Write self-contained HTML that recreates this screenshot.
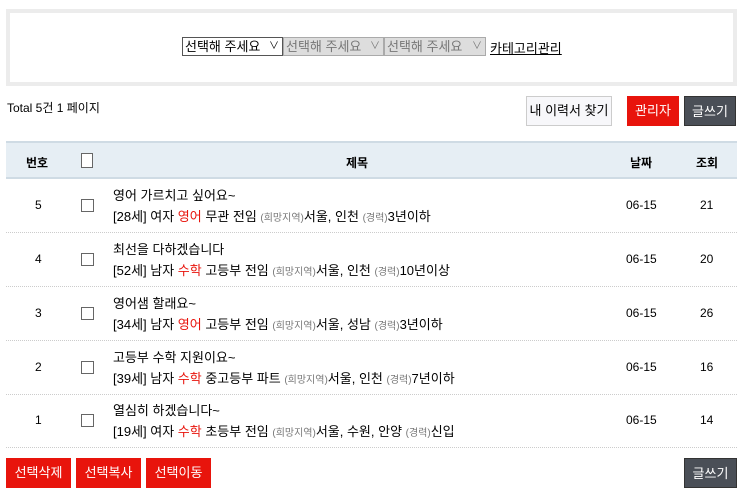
<!DOCTYPE html>
<html><head><meta charset="utf-8"><style>
*{margin:0;padding:0;box-sizing:border-box}
body{width:743px;height:498px;background:#fff;font-family:"Liberation Sans","Noto Sans CJK KR",sans-serif;font-size:12px;color:#000;position:relative;overflow:hidden}
.a{position:absolute}
.topbox{left:6px;top:9px;width:731px;height:77px;border:4px solid #ececec;background:#fff}
.sel{top:37px;height:19px;border:1px solid #aaa;background:#ddd;color:#777;font-size:13px;line-height:17px;padding-left:2px;white-space:nowrap}
.sel span{position:absolute;right:3px;top:0;font-size:10px}
.btn{height:30px;line-height:30px;text-align:center;font-size:13px;color:#fff}
.red{background:#e8140c}
.dark{background:#4a4f57;border:1px solid #333}
.hdr{left:6px;top:141px;width:731px;height:38px;background:#e6eef4;border-top:2px solid #cfdbe4;border-bottom:2px solid #cfdbe4;font-weight:bold;font-size:12px}
.hdr div{position:absolute;top:11px}
.cb{width:13px;height:13px;border:1px solid #666;background:#fff}
.row{left:6px;width:731px;height:54px;border-bottom:1px dotted #ccc}
.row div{position:absolute}
.t{font-size:13px;white-space:nowrap}
.r{color:#e8140c}
.g{color:#777;font-size:10px}
</style></head><body>
<div class="a topbox"></div>
<div class="a sel" style="left:182px;width:101px;background:#fff;color:#000;border-color:#555">선택해 주세요<span style="color:#000">∨</span></div>
<div class="a sel" style="left:283px;width:101px">선택해 주세요<span>∨</span></div>
<div class="a sel" style="left:384px;width:102px">선택해 주세요<span>∨</span></div>
<div class="a" style="left:490px;top:38px;text-decoration:underline;font-size:13px">카테고리관리</div>
<div class="a" style="left:7px;top:99px">Total 5건 1 페이지</div>
<div class="a btn" style="left:526px;top:96px;width:86px;background:#f7f7fa;border:1px solid #ccc;color:#000;line-height:28px">내 이력서 찾기</div>
<div class="a btn red" style="left:627px;top:96px;width:52px">관리자</div>
<div class="a btn dark" style="left:684px;top:96px;width:52px">글쓰기</div>
<div class="a hdr">
<div style="left:20px">번호</div>
<div class="cb" style="left:75px;top:10px;width:12px;height:15px"></div>
<div style="left:340px">제목</div>
<div style="left:624px">날짜</div>
<div style="left:690px">조회</div>
</div>
<div class="a row" style="top:179px"><div style="left:29px;top:19px">5</div><div class="cb" style="left:75px;top:20px"></div><div class="t" style="left:107px;top:6px;line-height:21px">영어 가르치고 싶어요~<br>[28세] 여자 <span class="r">영어</span> 무관 전임 <span class="g">(희망지역)</span>서울, 인천 <span class="g">(경력)</span>3년이하</div><div style="left:620px;top:19px">06-15</div><div style="left:694px;top:19px">21</div></div>
<div class="a row" style="top:233px"><div style="left:29px;top:19px">4</div><div class="cb" style="left:75px;top:20px"></div><div class="t" style="left:107px;top:6px;line-height:21px">최선을 다하겠습니다<br>[52세] 남자 <span class="r">수학</span> 고등부 전임 <span class="g">(희망지역)</span>서울, 인천 <span class="g">(경력)</span>10년이상</div><div style="left:620px;top:19px">06-15</div><div style="left:694px;top:19px">20</div></div>
<div class="a row" style="top:287px"><div style="left:29px;top:19px">3</div><div class="cb" style="left:75px;top:20px"></div><div class="t" style="left:107px;top:6px;line-height:21px">영어샘 할래요~<br>[34세] 남자 <span class="r">영어</span> 고등부 전임 <span class="g">(희망지역)</span>서울, 성남 <span class="g">(경력)</span>3년이하</div><div style="left:620px;top:19px">06-15</div><div style="left:694px;top:19px">26</div></div>
<div class="a row" style="top:341px"><div style="left:29px;top:19px">2</div><div class="cb" style="left:75px;top:20px"></div><div class="t" style="left:107px;top:6px;line-height:21px">고등부 수학 지원이요~<br>[39세] 남자 <span class="r">수학</span> 중고등부 파트 <span class="g">(희망지역)</span>서울, 인천 <span class="g">(경력)</span>7년이하</div><div style="left:620px;top:19px">06-15</div><div style="left:694px;top:19px">16</div></div>
<div class="a row" style="top:394px"><div style="left:29px;top:19px">1</div><div class="cb" style="left:75px;top:20px"></div><div class="t" style="left:107px;top:6px;line-height:21px">열심히 하겠습니다~<br>[19세] 여자 <span class="r">수학</span> 초등부 전임 <span class="g">(희망지역)</span>서울, 수원, 안양 <span class="g">(경력)</span>신입</div><div style="left:620px;top:19px">06-15</div><div style="left:694px;top:19px">14</div></div>
<div class="a btn red" style="left:6px;top:458px;width:65px">선택삭제</div>
<div class="a btn red" style="left:76px;top:458px;width:65px">선택복사</div>
<div class="a btn red" style="left:146px;top:458px;width:65px">선택이동</div>
<div class="a btn dark" style="left:684px;top:458px;width:53px">글쓰기</div>
</body></html>
